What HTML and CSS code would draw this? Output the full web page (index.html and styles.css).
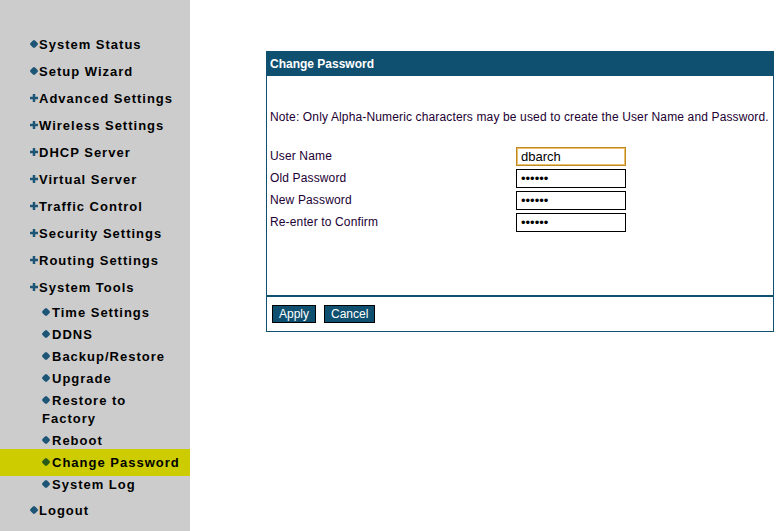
FILE: index.html
```html
<!DOCTYPE html>
<html lang="en">
<head>
    <meta charset="UTF-8">
    <title>Change Password</title>
    <link rel="stylesheet" href="styles.css">
</head>
<body>
    <div class="sidebar">
        <ul class="menu">
            <li class="top"><svg class="dot" viewBox="0 0 8 8"><polygon points="3.2,0.2 4.8,0.2 7.8,3.2 7.8,4.8 4.8,7.8 3.2,7.8 0.2,4.8 0.2,3.2"/></svg>System Status</li>
            <li class="top"><svg class="dot" viewBox="0 0 8 8"><polygon points="3.2,0.2 4.8,0.2 7.8,3.2 7.8,4.8 4.8,7.8 3.2,7.8 0.2,4.8 0.2,3.2"/></svg>Setup Wizard</li>
            <li class="top"><svg class="dot" viewBox="0 0 8 8"><path d="M2.75 0h2.5v2.75h2.75v2.5h-2.75v2.75h-2.5v-2.75h-2.75v-2.5h2.75z"/></svg>Advanced Settings</li>
            <li class="top"><svg class="dot" viewBox="0 0 8 8"><path d="M2.75 0h2.5v2.75h2.75v2.5h-2.75v2.75h-2.5v-2.75h-2.75v-2.5h2.75z"/></svg>Wireless Settings</li>
            <li class="top"><svg class="dot" viewBox="0 0 8 8"><path d="M2.75 0h2.5v2.75h2.75v2.5h-2.75v2.75h-2.5v-2.75h-2.75v-2.5h2.75z"/></svg>DHCP Server</li>
            <li class="top"><svg class="dot" viewBox="0 0 8 8"><path d="M2.75 0h2.5v2.75h2.75v2.5h-2.75v2.75h-2.5v-2.75h-2.75v-2.5h2.75z"/></svg>Virtual Server</li>
            <li class="top"><svg class="dot" viewBox="0 0 8 8"><path d="M2.75 0h2.5v2.75h2.75v2.5h-2.75v2.75h-2.5v-2.75h-2.75v-2.5h2.75z"/></svg>Traffic Control</li>
            <li class="top"><svg class="dot" viewBox="0 0 8 8"><path d="M2.75 0h2.5v2.75h2.75v2.5h-2.75v2.75h-2.5v-2.75h-2.75v-2.5h2.75z"/></svg>Security Settings</li>
            <li class="top"><svg class="dot" viewBox="0 0 8 8"><path d="M2.75 0h2.5v2.75h2.75v2.5h-2.75v2.75h-2.5v-2.75h-2.75v-2.5h2.75z"/></svg>Routing Settings</li>
            <li class="top"><svg class="dot" viewBox="0 0 8 8"><path d="M2.75 0h2.5v2.75h2.75v2.5h-2.75v2.75h-2.5v-2.75h-2.75v-2.5h2.75z"/></svg>System Tools</li>
            <li class="sub first"><svg class="dot" viewBox="0 0 8 8"><polygon points="3.2,0.2 4.8,0.2 7.8,3.2 7.8,4.8 4.8,7.8 3.2,7.8 0.2,4.8 0.2,3.2"/></svg>Time Settings</li>
            <li class="sub"><svg class="dot" viewBox="0 0 8 8"><polygon points="3.2,0.2 4.8,0.2 7.8,3.2 7.8,4.8 4.8,7.8 3.2,7.8 0.2,4.8 0.2,3.2"/></svg>DDNS</li>
            <li class="sub"><svg class="dot" viewBox="0 0 8 8"><polygon points="3.2,0.2 4.8,0.2 7.8,3.2 7.8,4.8 4.8,7.8 3.2,7.8 0.2,4.8 0.2,3.2"/></svg>Backup/Restore</li>
            <li class="sub"><svg class="dot" viewBox="0 0 8 8"><polygon points="3.2,0.2 4.8,0.2 7.8,3.2 7.8,4.8 4.8,7.8 3.2,7.8 0.2,4.8 0.2,3.2"/></svg>Upgrade</li>
            <li class="sub"><svg class="dot" viewBox="0 0 8 8"><polygon points="3.2,0.2 4.8,0.2 7.8,3.2 7.8,4.8 4.8,7.8 3.2,7.8 0.2,4.8 0.2,3.2"/></svg>Restore to<br>Factory</li>
            <li class="sub"><svg class="dot" viewBox="0 0 8 8"><polygon points="3.2,0.2 4.8,0.2 7.8,3.2 7.8,4.8 4.8,7.8 3.2,7.8 0.2,4.8 0.2,3.2"/></svg>Reboot</li>
            <li class="sub active"><svg class="dot" viewBox="0 0 8 8"><polygon points="3.2,0.2 4.8,0.2 7.8,3.2 7.8,4.8 4.8,7.8 3.2,7.8 0.2,4.8 0.2,3.2"/></svg>Change Password</li>
            <li class="sub"><svg class="dot" viewBox="0 0 8 8"><polygon points="3.2,0.2 4.8,0.2 7.8,3.2 7.8,4.8 4.8,7.8 3.2,7.8 0.2,4.8 0.2,3.2"/></svg>System Log</li>
            <li class="top last"><svg class="dot" viewBox="0 0 8 8"><polygon points="3.2,0.2 4.8,0.2 7.8,3.2 7.8,4.8 4.8,7.8 3.2,7.8 0.2,4.8 0.2,3.2"/></svg>Logout</li>
        </ul>
    </div>

    <div class="main">
        <div class="panel">
            <div class="panel-title">Change Password</div>
            <div class="panel-body">
                <p class="note">Note: Only Alpha-Numeric characters may be used to create the User Name and Password.</p>
                <div class="form">
                    <label>User Name</label>
                    <input type="text" class="focused" value="dbarch">
                    <label>Old Password</label>
                    <input type="password" value="abcdef">
                    <label>New Password</label>
                    <input type="password" value="abcdef">
                    <label>Re-enter to Confirm</label>
                    <input type="password" value="abcdef">
                </div>
            </div>
            <div class="panel-foot">
                <button>Apply</button>
                <button>Cancel</button>
            </div>
        </div>
    </div>
</body>
</html>
```

FILE: styles.css
```css
body {
    margin: 0;
    display: flex;
    min-height: 531px;
    background: #ffffff;
    font-family: "Liberation Sans", Arial, sans-serif;
}
.sidebar {
    width: 190px;
    flex: none;
    background: #cccccc;
}
.menu {
    list-style: none;
    margin: 0;
    padding: 31px 0 0 0;
    font-size: 13px;
    font-weight: bold;
    letter-spacing: 1px;
    color: #000;
}
.menu .top {
    line-height: 27px;
    padding-left: 30px;
}
.menu .sub {
    line-height: 18px;
    padding: 2px 0 2px 42px;
}
.menu .sub.first {
    margin-top: 1px;
}
.menu .last {
    margin-top: 1px;
}
.menu .active {
    background: #cccc00;
    padding-top: 5px;
    padding-bottom: 4px;
    margin: -3px 0 -2px 0;
}
.dot {
    width: 8px;
    height: 8px;
    margin-right: 1px;
    fill: #1d5576;
    vertical-align: 1px;
}
.sub .dot {
    margin-right: 2px;
}
.active .dot {
    fill: #2a5a1a;
}
.main {
    flex: 1;
    padding: 51px 0 0 76px;
}
.panel {
    width: 506px;
    border: 1px solid #0f4f70;
}
.panel-title {
    background: #0f4f70;
    color: #ffffff;
    font-size: 12px;
    font-weight: bold;
    height: 24px;
    line-height: 24px;
    padding-left: 3px;
}
.panel-body {
    height: 219px;
    padding: 0 3px;
    color: #220033;
    font-size: 12px;
    letter-spacing: 0.14px;
}
.note {
    margin: 0;
    padding-top: 34px;
    line-height: 14px;
}
.form {
    display: grid;
    grid-template-columns: 246px 110px;
    grid-auto-rows: 22px;
    align-items: center;
    margin-top: 21px;
}
.form label {
    line-height: 14px;
}
.form input {
    box-sizing: border-box;
    width: 110px;
    height: 19px;
    border: 1px solid #000;
    padding: 0 4px;
    margin: 0;
    font-size: 13px;
    font-family: "Liberation Sans", Arial, sans-serif;
    color: #000;
    outline: none;
}
.form input.focused {
    border: 1px solid #c08a20;
    box-shadow: inset 0 0 0 1px #e8c070;
}
.panel-foot {
    border-top: 2px solid #0f4f70;
    height: 36px;
    padding: 8px 0 0 5px;
    box-sizing: border-box;
    display: flex;
    gap: 8px;
    align-items: flex-start;
}
.panel-foot button {
    background: #0f4f70;
    color: #ffffff;
    border: 1px solid #000;
    font-family: "Liberation Sans", Arial, sans-serif;
    font-size: 12px;
    height: 18px;
    padding: 0 6px;
    line-height: 16px;
    cursor: pointer;
}
```
